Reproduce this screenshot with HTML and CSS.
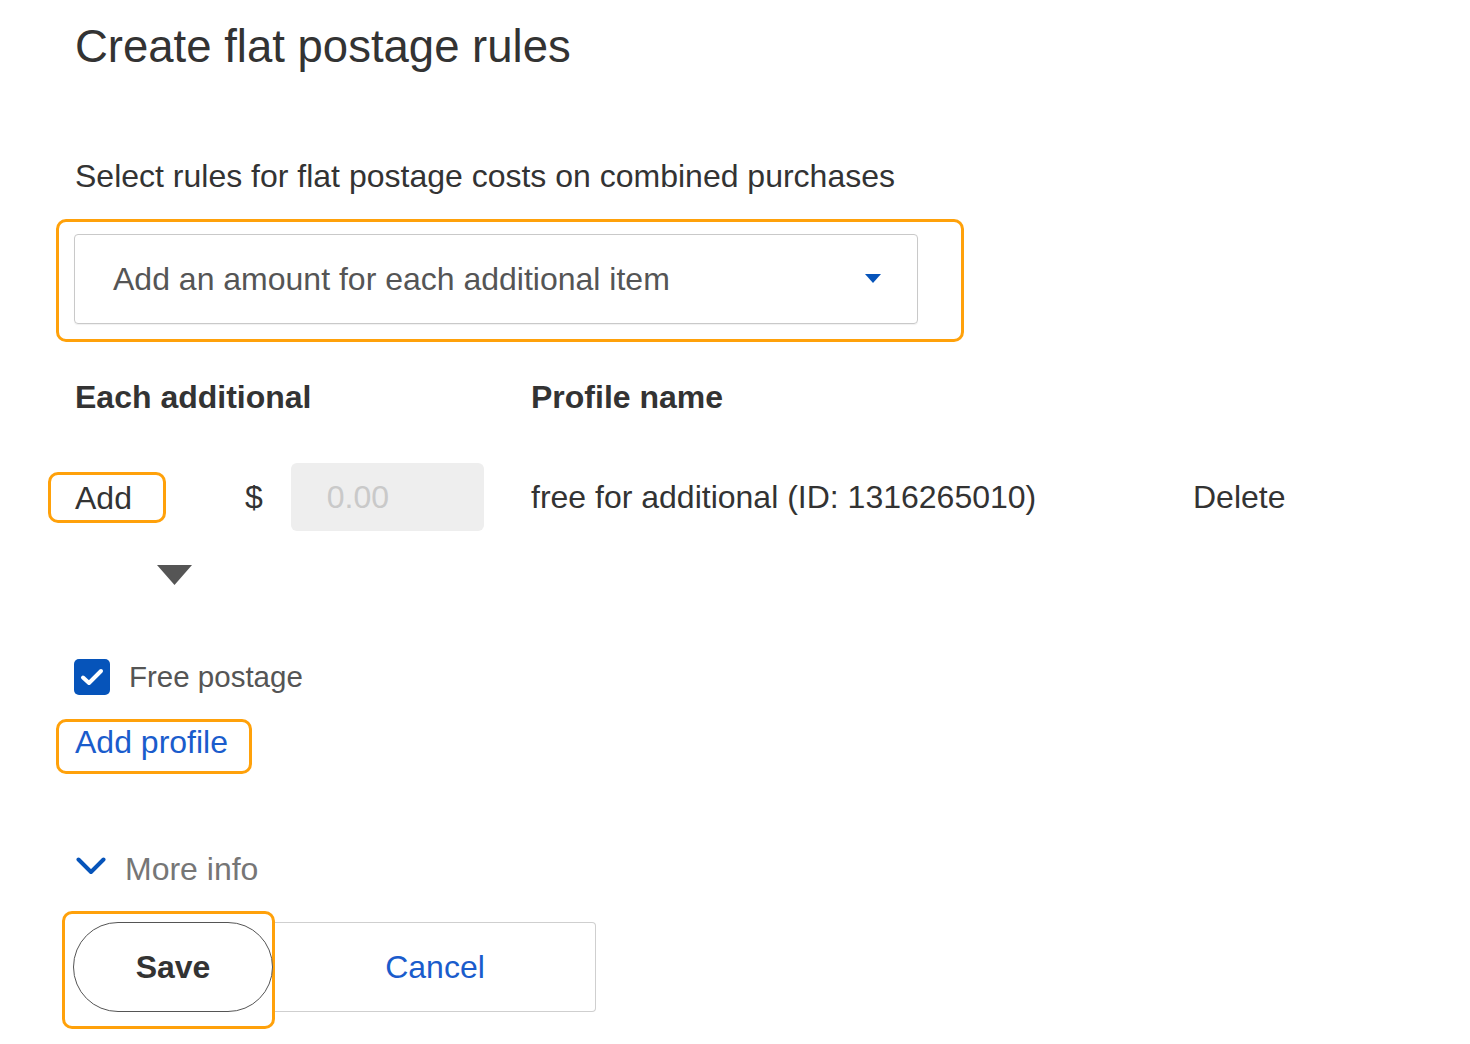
FILE: index.html
```html
<!DOCTYPE html>
<html lang="en">
<head>
<meta charset="utf-8">
<title>Create flat postage rules</title>
<link rel="stylesheet" href="styles.css">
</head>
<body>
<div class="page">
  <h1 class="title">Create flat postage rules</h1>
  <p class="subtitle">Select rules for flat postage costs on combined purchases</p>

  <div class="hl hl-select">
    <div class="select">
      <span class="select-text">Add an amount for each additional item</span>
      <svg class="select-caret" width="16" height="9" viewBox="0 0 16 9"><polygon points="0,0 16,0 8,9" fill="#0654ba"/></svg>
    </div>
  </div>

  <div class="grid">
    <div class="head">Each additional</div>
    <div class="head">Profile name</div>
    <div></div>

    <div class="cell-amount">
      <div class="hl hl-add"><span>Add</span></div>
      <span class="dollar">$</span>
      <div class="amount-input">0.00</div>
    </div>
    <div class="cell-text">free for additional (ID: 1316265010)</div>
    <div class="cell-text">Delete</div>
  </div>

  <svg class="down-tri" width="35" height="20" viewBox="0 0 35 20"><polygon points="0,0 35,0 17.5,20" fill="#555"/></svg>

  <label class="check-row">
    <svg class="checkbox" width="36" height="36" viewBox="0 0 36 36"><rect x="0" y="0" width="36" height="36" rx="5" fill="#0654ba"/><path d="M9 18.5 L15 24 L27 12" fill="none" stroke="#fff" stroke-width="4" stroke-linecap="round" stroke-linejoin="round"/></svg>
    <span class="check-label">Free postage</span>
  </label>

  <div class="hl hl-link"><a class="link">Add profile</a></div>

  <div class="more-row">
    <svg class="chevron" width="30" height="18" viewBox="0 0 30 18"><polyline points="2.5,2.5 15,15 27.5,2.5" fill="none" stroke="#0654ba" stroke-width="4" stroke-linecap="round" stroke-linejoin="round"/></svg>
    <span class="more-text">More info</span>
  </div>

  <div class="btn-row">
    <div class="hl hl-save"><button class="btn-save">Save</button></div>
    <button class="btn-cancel">Cancel</button>
  </div>
</div>
</body>
</html>
```

FILE: styles.css
```css
html, body {
  margin: 0;
  padding: 0;
  background: #fff;
}

.page {
  padding: 0 0 0 75px;
  font-family: "Liberation Sans", Arial, sans-serif;
  color: #333;
  font-size: 32px;
  line-height: 38px;
}

.title {
  margin: 20px 0 0;
  font-size: 45.5px;
  line-height: 54px;
  font-weight: normal;
  color: #333;
}

.subtitle {
  margin: 83px 0 0;
  font-size: 32px;
  line-height: 38px;
  color: #333;
}

.hl {
  border: 3px solid #ffa10a;
  border-radius: 10px;
  box-sizing: border-box;
}

.hl-select {
  margin: 24px 0 0 -19px;
  width: 908px;
  padding: 12px 43px 15px 15px;
}

.select {
  height: 90px;
  box-sizing: border-box;
  border: 1px solid #c9c9c9;
  border-radius: 4px;
  display: flex;
  align-items: center;
  justify-content: space-between;
  padding: 0 36px 0 38px;
  box-shadow: 0 1px 1px rgba(0,0,0,0.06);
}

.select-text {
  color: #555;
}

.select-caret {
  display: block;
  margin-top: -2px;
}

.grid {
  display: grid;
  grid-template-columns: 456px 662px auto;
  margin-top: 36px;
  row-gap: 47px;
}

.head {
  font-weight: bold;
  color: #333;
}

.cell-amount {
  display: flex;
  align-items: center;
  height: 68px;
}

.hl-add {
  margin-left: -27px;
  width: 118px;
  height: 51px;
  padding: 4px 0 0 24px;
}

.hl-add span {
  color: #333;
}

.dollar {
  margin-left: 79px;
  color: #333;
}

.amount-input {
  margin-left: 28px;
  width: 193px;
  height: 68px;
  box-sizing: border-box;
  background: #eeeeee;
  border-radius: 6px;
  padding-left: 36px;
  display: flex;
  align-items: center;
  color: #c9c9c9;
}

.cell-text {
  display: flex;
  align-items: center;
  height: 68px;
  color: #333;
}

.down-tri {
  display: block;
  margin: 34px 0 0 82px;
}

.check-row {
  display: flex;
  align-items: center;
  margin: 74px 0 0 -1px;
  height: 36px;
}

.checkbox {
  display: block;
  flex: none;
}

.check-label {
  margin-left: 19px;
  font-size: 29.5px;
  color: #555;
}

.hl-link {
  margin: 24px 0 0 -19px;
  width: 196px;
  height: 55px;
  padding: 1px 0 0 16px;
}

.link {
  color: #1a5ccc;
  text-decoration: none;
}

.more-row {
  display: flex;
  align-items: center;
  margin-top: 76px;
  height: 38px;
}

.chevron {
  display: block;
  margin-left: 1px;
  margin-top: -6px;
}

.more-text {
  margin-left: 19px;
  color: #767676;
}

.btn-row {
  display: flex;
  align-items: flex-start;
  margin-top: 23px;
}

.hl-save {
  margin-left: -13px;
  padding: 8px 0 14px 8px;
  width: 213px;
}

.btn-save {
  display: block;
  width: 200px;
  height: 90px;
  box-sizing: border-box;
  border: 1.5px solid #555;
  border-radius: 45px;
  background: #fff;
  font-family: "Liberation Sans", Arial, sans-serif;
  font-size: 32px;
  font-weight: bold;
  color: #333;
  padding: 0;
}

.btn-cancel {
  margin-top: 11px;
  width: 321px;
  height: 90px;
  box-sizing: border-box;
  border: 1px solid #cfcfcf;
  border-left: none;
  border-radius: 0 4px 4px 0;
  background: #fff;
  font-family: "Liberation Sans", Arial, sans-serif;
  font-size: 32px;
  color: #1a5ccc;
  padding: 0;
}
```
